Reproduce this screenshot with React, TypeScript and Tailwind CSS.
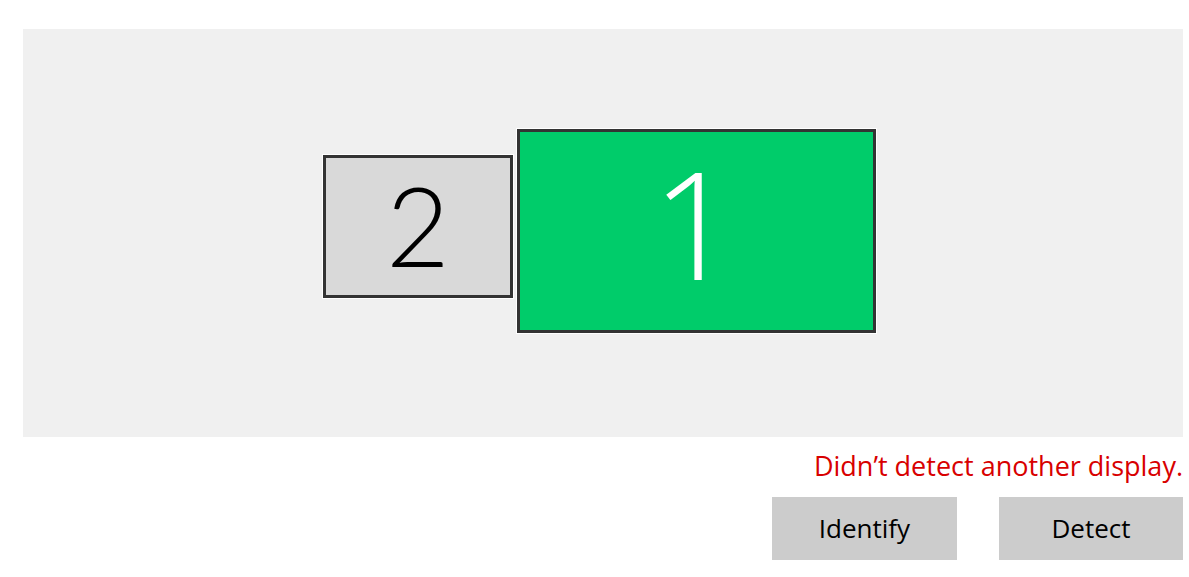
export default function App() {
  return (
    <div className="w-[1189px] h-[577px] bg-white overflow-hidden" style={{ fontFamily: '"Open Sans", "Noto Sans", sans-serif' }}>
      <div className="pl-[23px] pr-[6px] pt-[29px]">
        <div className="relative h-[408px] bg-[#f0f0f0]">
          {/* display 2 */}
          <div className="absolute left-[300px] top-[126px] w-[190px] h-[143px] border-[3px] border-[#333333] outline outline-1 outline-white bg-[#d9d9d9] flex items-center justify-center">
            <span className="text-[110px] font-light leading-none text-black -mt-[6px]" style={{ fontFamily: 'Lato, "Open Sans", sans-serif' }}>2</span>
          </div>
          {/* display 1 */}
          <div className="absolute left-[494px] top-[100px] w-[359px] h-[204px] border-[3px] border-[#333333] outline outline-1 outline-white bg-[#00cc6a] flex items-center justify-center">
            <span className="text-[150px] font-light leading-none text-white -mt-[18px] -ml-[4px]">1</span>
          </div>
        </div>
      </div>
      <div className="flex flex-col items-end pr-[6px]">
        <p className="mt-[12px] text-[27px] leading-[34px] text-[#d80000]">Didn’t detect another display.</p>
        <div className="mt-[14px] flex gap-[42px]">
          <button className="w-[185px] h-[63px] bg-[#cccccc] text-[26px] text-black">Identify</button>
          <button className="w-[184px] h-[63px] bg-[#cccccc] text-[26px] text-black">Detect</button>
        </div>
      </div>
    </div>
  );
}
